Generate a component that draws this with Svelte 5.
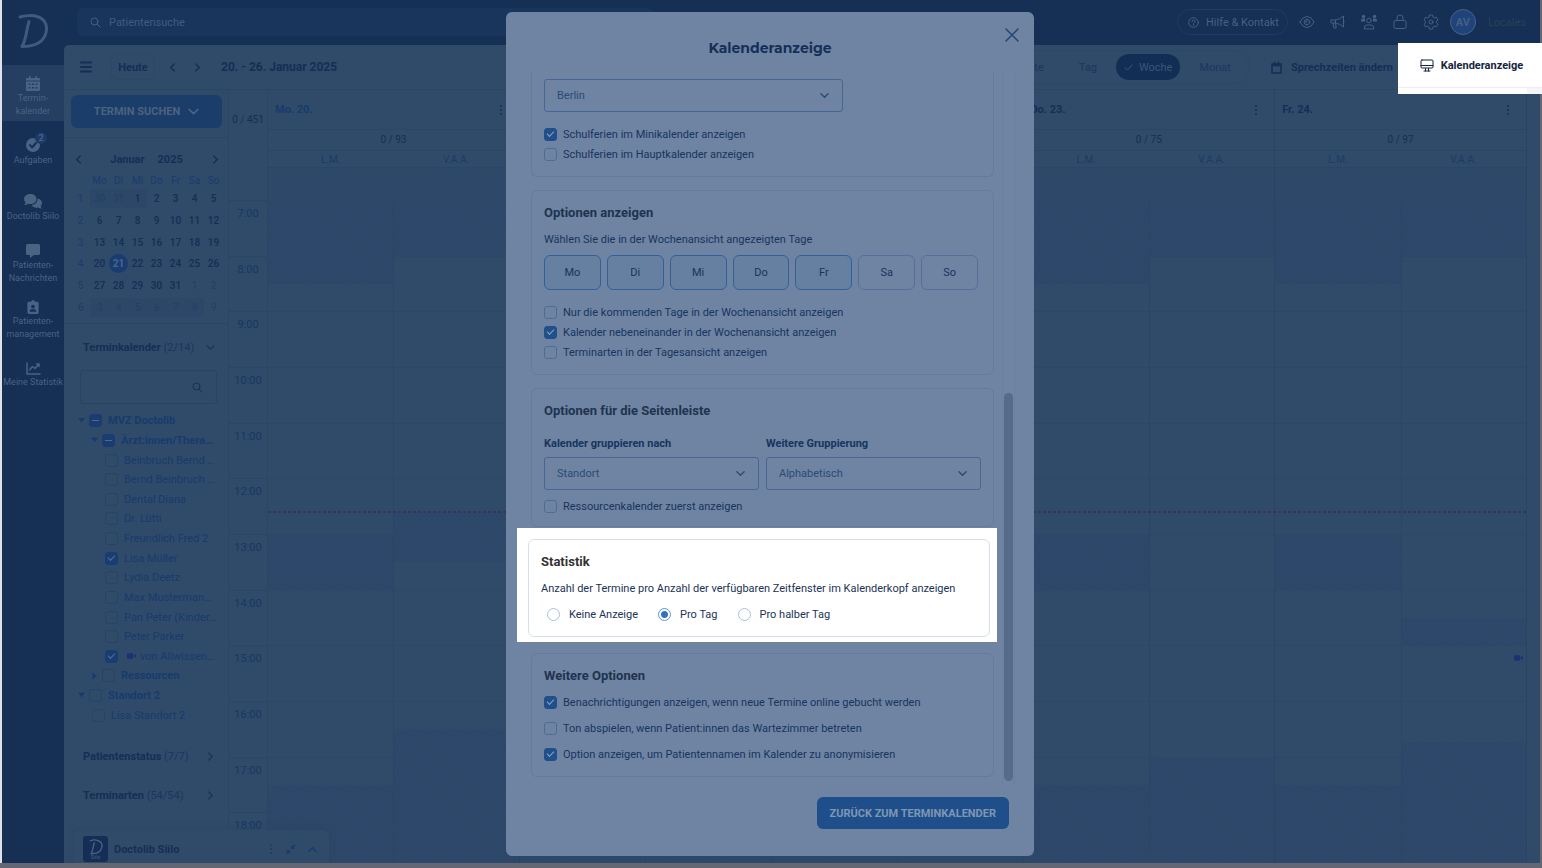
<script lang="ts">
	type Block = [number, number];

	const FIRST_HOUR = 7;
	const HOUR_COUNT = 12;
	const hours = Array.from({ length: HOUR_COUNT }, (_, i) => FIRST_HOUR + i);

	// closed times per practitioner, in hours
	const days: { name?: string; count?: string; muted?: boolean; lm: Block[]; vaa: Block[]; video?: boolean }[] = [
		{ name: 'Mo. 20.', count: '0 / 93', muted: true, lm: [[7, 8.5], [13, 14], [17.5, 19]], vaa: [[7, 8], [12.6, 13.5], [16.5, 19]] },
		{ lm: [[7, 8.5], [13, 14], [17.5, 19]], vaa: [[7, 8], [17, 19]] },
		{ lm: [[7, 8.5], [13, 14], [17.5, 19]], vaa: [[7, 8], [17, 19]] },
		{ name: 'Do. 23.', count: '0 / 75', lm: [[7, 8.5], [13, 14], [17.5, 19]], vaa: [[7, 8], [17, 19]] },
		{ name: 'Fr. 24.', count: '0 / 97', lm: [[7, 8.5], [13, 14], [17.5, 19]], vaa: [[7, 8], [14.5, 15], [16.75, 19]], video: true }
	];

	const blockStyle = ([from, to]: Block) =>
		`top: ${((from - FIRST_HOUR) / HOUR_COUNT) * 100}%; height: ${((to - from) / HOUR_COUNT) * 100}%`;

	const weekdays = ['Mo', 'Di', 'Mi', 'Do', 'Fr', 'Sa', 'So'];
	const weeks = [
		[30, 31, 1, 2, 3, 4, 5],
		[6, 7, 8, 9, 10, 11, 12],
		[13, 14, 15, 16, 17, 18, 19],
		[20, 21, 22, 23, 24, 25, 26],
		[27, 28, 29, 30, 31, 1, 2],
		[3, 4, 5, 6, 7, 8, 9]
	];
	const isOtherMonth = (w: number, d: number) => (w === 0 && d > 20) || (w > 3 && d < 15);

	type Row = { label: string; level: number; bold?: boolean; arrow?: 'down' | 'right'; checked?: boolean; partial?: boolean; video?: boolean };
	const tree: Row[] = [
		{ label: 'MVZ Doctolib', level: 0, bold: true, arrow: 'down', partial: true },
		{ label: 'Ärzt:innen/Thera…', level: 1, bold: true, arrow: 'down', partial: true },
		{ label: 'Beinbruch Bernd …', level: 2 },
		{ label: 'Bernd Beinbruch …', level: 2 },
		{ label: 'Dental Diana', level: 2 },
		{ label: 'Dr. Lütti', level: 2 },
		{ label: 'Freundlich Fred 2', level: 2 },
		{ label: 'Lisa Müller', level: 2, checked: true },
		{ label: 'Lydia Deetz', level: 2 },
		{ label: 'Max Musterman…', level: 2 },
		{ label: 'Pan Peter (Kinder…', level: 2 },
		{ label: 'Peter Parker', level: 2 },
		{ label: 'von Allwissen…', level: 2, checked: true, video: true },
		{ label: 'Ressourcen', level: 1, bold: true, arrow: 'right' },
		{ label: 'Standort 2', level: 0, bold: true, arrow: 'down' },
		{ label: 'Lisa Standort 2', level: 3 }
	];

	let shownDays = $state([true, true, true, true, true, false, false]);
	let statistik = $state('tag');
</script>

{#snippet chevron(dir: string, size = 9)}
	<svg class="chevron {dir}" width={size} height={size} viewBox="0 0 10 10"><path d="M1 3l4 4 4-4" /></svg>
{/snippet}

{#snippet dots()}
	<svg class="solid" width="4" height="12" viewBox="0 0 4 12"><circle cx="2" cy="2" r="1" /><circle cx="2" cy="6" r="1" /><circle cx="2" cy="10" r="1" /></svg>
{/snippet}

{#snippet camera()}
	<svg class="solid camera" width="9" height="8" viewBox="0 0 10 8"><path d="M1 1h5q1 0 1 1v4q0 1-1 1H1Q0 7 0 6V2q0-1 1-1zM7.5 3.5 10 2v4L7.5 4.5z" /></svg>
{/snippet}

{#snippet logo(size: number)}
	<svg width={size} height={size} viewBox="0 0 32 36"><path fill="none" stroke="currentColor" stroke-width="3" stroke-linecap="round" stroke-linejoin="round" d="M3 4c4-1.500 13-2 17-.5 7 2 11 8 9 16-2 9-9 14-24 14 4-6 4-15 7-25" /></svg>
{/snippet}

{#snippet check(label: string, checked = false)}
	<label class="check"><input type="checkbox" {checked} /><span>{label}</span></label>
{/snippet}

<div class="app">
	<nav>
		<a class="brand" href="#start" aria-label="Doctolib">{@render logo(36)}</a>
		<a class="item active" href="#termine">
			<svg class="solid" width="14" height="15" viewBox="0 0 14 15"><path fill-rule="evenodd" d="M3 0h1.500v2h5V0H11v2h2q1 0 1 1v1.500H0V3q0-1 1-1h2zM0 5.500h14V14q0 1-1 1H1q-1 0-1-1zM2.500 7.500v1.500h2V7.500zm3.500 0v1.500h2V7.500zm3.500 0v1.500h2V7.500zm-7 3.500v1.500h2V11zm3.500 0v1.500h2V11zm3.500 0v1.500h2V11z" /></svg>
			<span>Termin-<br />kalender</span>
		</a>
		<a class="item short" href="#aufgaben">
			<span class="with-badge">
				<svg width="16" height="16" viewBox="0 0 16 16"><circle class="fill" cx="8" cy="8" r="7" /><path class="cut" d="M5 8l2 2.500L11 6" /></svg>
				<b class="badge">2</b>
			</span>
			<span>Aufgaben</span>
		</a>
		<a class="item short" href="#siilo">
			<svg class="solid" width="18" height="15" viewBox="0 0 18 15"><path d="M6.500 0C10 0 12.500 2 12.500 5s-2.500 5-6 5q-1 0-2-.3Q3 11 0 11q1.500-1.300 1.600-2.600Q0 7 0 5c0-3 3-5 6.500-5zM13.500 4.500c2.500.3 4.500 2 4.500 4.500q0 1.800-1.300 3Q17 13.500 18 14.500q-2.500 0-4-1-4.500 1-6.500-2.500 6 0 6-6.500z" /></svg>
			<span>Doctolib Siilo</span>
		</a>
		<a class="item" href="#nachrichten">
			<svg class="solid" width="14" height="14" viewBox="0 0 14 14"><path d="M1.500 0h11Q14 0 14 1.500v8Q14 11 12.500 11H8l-4 3v-3H1.500Q0 11 0 9.500v-8Q0 0 1.500 0z" /></svg>
			<span>Patienten-<br />Nachrichten</span>
		</a>
		<a class="item" href="#patienten">
			<svg class="solid" width="12" height="14" viewBox="0 0 12 15"><path fill-rule="evenodd" d="M1.500 2H4a2 2 0 0 1 4 0h2.500Q12 2 12 3.500v10q0 1.500-1.500 1.500h-9Q0 15 0 13.500v-10Q0 2 1.500 2zM6 5a2 2 0 1 0 0 4 2 2 0 0 0 0-4zM2.500 12.500h7q0-2.500-2-2.500h-3q-2 0-2 2.500z" /></svg>
			<span>Patienten-<br />management</span>
		</a>
		<a class="item short" href="#statistik">
			<svg class="line" width="15" height="13" viewBox="0 0 15 13"><path stroke-width="1.500" d="M1 1v11h13M3.500 8l3-3.500L9 6.500l4-4.500M10.500 2H13v2.500" /></svg>
			<span>Meine Statistik</span>
		</a>
	</nav>

	<div class="main">
		<header>
			<label class="search">
				<svg class="line" width="11" height="11" viewBox="0 0 11 11"><circle cx="4.500" cy="4.500" r="3.500" /><path d="M7.200 7.200l3 3" /></svg>
				<input type="text" placeholder="Patientensuche" aria-label="Patientensuche" />
			</label>
			<div class="tools">
				<button class="help">
					<svg class="line" width="11" height="11" viewBox="0 0 11 11"><circle cx="5.500" cy="5.500" r="4.800" /><path d="M4 4.400q0-1.400 1.500-1.400T7 4.300c0 1-1.500 1-1.500 2M5.500 7.500v.7" /></svg>
					Hilfe &amp; Kontakt
				</button>
				<button class="icon" aria-label="Anzeigen">
					<svg class="line" width="16" height="14" viewBox="0 0 16 14"><path d="M1 7q2.500-5.500 7-5.500T15 7q-2.500 5.500-7 5.500T1 7z" /><circle cx="8" cy="7" r="2.800" /><path d="M8 5.500v1.500H6.500" /></svg>
				</button>
				<button class="icon" aria-label="Neuigkeiten">
					<svg class="line" width="16" height="16" viewBox="0 0 16 16"><path d="M1.500 6h4q4-.5 8-4v11q-4-3.500-8-4h-4q-.8 0-.8-1V7q0-1 .8-1zM5.500 6v3M3 9l1 5h2.200L5.500 9M13.500 6q1.200 1.500 0 3" /></svg>
				</button>
				<button class="icon" aria-label="Team">
					<svg class="team" width="18" height="16" viewBox="0 0 18 16"><path class="fill" d="M1 6.500q0-2 2-2h2v3H1zM17 6.500q0-2-2-2h-2v3h4z" /><circle class="fill" cx="3.500" cy="2.500" r="1.700" /><circle class="fill" cx="14.500" cy="2.500" r="1.700" /><circle cx="9" cy="6.500" r="2.300" /><path d="M4 14.500q0-3.500 3-3.500h4q3 0 3 3.500z" /></svg>
				</button>
				<button class="icon" aria-label="Sperren">
					<svg class="line" width="14" height="16" viewBox="0 0 14 16"><rect x="1" y="6.500" width="12" height="8" rx="1.500" /><path d="M4 6.500V4a3 3 0 0 1 6 0v2.500" /></svg>
				</button>
				<button class="icon" aria-label="Einstellungen">
					<svg class="line" width="16" height="16" viewBox="0 0 16 16"><path d="M6.500 1h3l.5 2 1.500.9 2-.6 1.500 2.600L13.500 7.300v1.500L15 10.200l-1.500 2.600-2-.6-1.500.9-.5 2h-3L6 13.100l-1.500-.9-2 .6L1 10.200l1.500-1.400V7.300L1 5.900l1.500-2.600 2 .6L6 3z" /><circle cx="8" cy="8" r="2" /></svg>
				</button>
				<button class="avatar">AV</button>
				<a class="locales" href="#locales">Locales</a>
			</div>
		</header>

		<div class="toolbar">
			<button class="burger" aria-label="Menü"><svg class="thick" width="14" height="12" viewBox="0 0 14 12"><path d="M2 1.500h10M2 6h10M2 10.500h10" /></svg></button>
			<button class="today">Heute</button>
			<button class="step" aria-label="Vorherige Woche">{@render chevron('left')}</button>
			<button class="step" aria-label="Nächste Woche">{@render chevron('right')}</button>
			<h1>20. - 26. Januar 2025</h1>
			<div class="views">
				<button>Liste</button>
				<button>Tag</button>
				<button class="current"><svg width="9" height="7" viewBox="0 0 9 7"><path d="M1 3.500L3.500 6 8 1" /></svg>Woche</button>
				<button>Monat</button>
			</div>
			<button class="office"><svg class="line" width="11" height="13" viewBox="0 0 11 13"><path stroke-width="1.500" d="M1 3h9v9H1zM3.500 1v3M7.500 1v3M1 4.500h9" /></svg>Sprechzeiten ändern</button>
			<div class="spotlight-menu">
				<button>
					<svg class="line" width="14" height="13" viewBox="0 0 14 13"><rect x="1" y="1" width="12" height="8" rx="1" /><path d="M1 6.500h12M5.500 9.500V12M8.500 9.500V12M4 12h6" /></svg>
					Kalenderanzeige
				</button>
				<div class="under"></div>
			</div>
		</div>

		<div class="content">
			<aside>
				<div class="find"><button>TERMIN SUCHEN {@render chevron('down', 11)}</button></div>
				<div class="mini">
					<div class="mini-head">
						<button aria-label="Vorheriger Monat">{@render chevron('left')}</button>
						<span>Januar</span><span>2025</span>
						<button aria-label="Nächster Monat">{@render chevron('right')}</button>
					</div>
					<table>
						<thead><tr><th></th>{#each weekdays as d}<th>{d}</th>{/each}</tr></thead>
						<tbody>
							{#each weeks as week, w}
								<tr>
									<th>{w + 1}</th>
									{#each week as d, i}
										<td class:other={isOtherMonth(w, d)} class:holiday={(w === 0 && i < 3) || (w === 5 && i < 6)}>
											<span class:selected={w === 3 && d === 21}>{d}</span>
										</td>
									{/each}
								</tr>
							{/each}
						</tbody>
					</table>
				</div>
				<button class="fold first"><span><b>Terminkalender</b> (2/14)</span>{@render chevron('down')}</button>
				<label class="filter">
					<input type="text" aria-label="Kalender filtern" />
					<svg class="line" width="11" height="11" viewBox="0 0 11 11"><circle cx="4.500" cy="4.500" r="3.500" /><path d="M7.200 7.200l3 3" /></svg>
				</label>
				<div class="tree">
					{#each tree as row}
						<div class="row level{row.level}">
							<i class="arrow {row.arrow ?? ''}"></i>
							<label class:bold={row.bold}>
								<input type="checkbox" checked={row.checked} class:partial={row.partial} />
								{#if row.video}{@render camera()}{/if}
								<span>{row.label}</span>
							</label>
						</div>
					{/each}
				</div>
				<button class="fold"><span><b>Patientenstatus</b> (7/7)</span>{@render chevron('right')}</button>
				<button class="fold"><span><b>Terminarten</b> (54/54)</span>{@render chevron('right')}</button>
			</aside>

			<section class="calendar">
				<div class="times">
					<div class="total">0 / 451</div>
					<div class="hour-list">
						{#each hours as h}<div>{h}:00</div>{/each}
					</div>
				</div>
				<div class="days">
					{#each days as day}
						<div class="day">
							<div class="day-name" class:muted={day.muted}>{#if day.name}<b>{day.name}</b>{@render dots()}{/if}</div>
							<div class="day-count">{day.count ?? ''}</div>
							<div class="doctors">{#if day.name}<span>L.M.</span><span>V.A.A.</span>{/if}</div>
							<div class="all-day"></div>
							<div class="slots">
								{#each [day.lm, day.vaa] as blocks, i}
									<div class="slot-col">
										{#each hours as h}<div class="hour"></div>{/each}
										{#each blocks as block}<div class="closed" style={blockStyle(block)}></div>{/each}
										{#if day.video && i === 1}<div class="call">{@render camera()}</div>{/if}
									</div>
								{/each}
							</div>
						</div>
					{/each}
					<div class="now"></div>
				</div>
			</section>
		</div>
	</div>

	<div class="siilo">
		<span class="siilo-logo">{@render logo(16)}<small>Siilo</small></span>
		<b>Doctolib Siilo</b>
		{@render dots()}
		<svg class="solid" width="11" height="11" viewBox="0 0 11 11"><path d="M6 5V1l1.500 1.500L9.500.5l1 1-2 2L10 5zM5 6v4L3.500 8.500l-2 2-1-1 2-2L1 6z" /></svg>
		{@render chevron('up')}
	</div>
	<div class="page-edge"></div>

	<div class="backdrop">
		<div class="modal" role="dialog" aria-modal="true" aria-labelledby="modal-title">
			<button class="close" aria-label="Schließen"><svg class="line" width="14" height="14" viewBox="0 0 14 14"><path d="M1 1l12 12M13 1L1 13" /></svg></button>
			<h2 id="modal-title">Kalenderanzeige</h2>
			<div class="scroller">
				<div class="cards">
					<section class="card cut-off">
						<div class="select wide">
							<select aria-label="Bundesland"><option>Berlin</option></select>
							{@render chevron('down')}
						</div>
						<div class="checks">
							{@render check('Schulferien im Minikalender anzeigen', true)}
							{@render check('Schulferien im Hauptkalender anzeigen')}
						</div>
					</section>

					<section class="card">
						<h3>Optionen anzeigen</h3>
						<p>Wählen Sie die in der Wochenansicht angezeigten Tage</p>
						<div class="day-buttons">
							{#each weekdays as d, i}
								<button class:on={shownDays[i]} aria-pressed={shownDays[i]} onclick={() => (shownDays[i] = !shownDays[i])}>{d}</button>
							{/each}
						</div>
						<div class="checks">
							{@render check('Nur die kommenden Tage in der Wochenansicht anzeigen')}
							{@render check('Kalender nebeneinander in der Wochenansicht anzeigen', true)}
							{@render check('Terminarten in der Tagesansicht anzeigen')}
						</div>
					</section>

					<section class="card sidebar-card">
						<h3>Optionen für die Seitenleiste</h3>
						<div class="fields">
							<div>
								<label for="group">Kalender gruppieren nach</label>
								<div class="select">
									<select id="group"><option>Standort</option></select>
									{@render chevron('down')}
								</div>
							</div>
							<div>
								<label for="group2">Weitere Gruppierung</label>
								<div class="select">
									<select id="group2"><option>Alphabetisch</option></select>
									{@render chevron('down')}
								</div>
							</div>
						</div>
						{@render check('Ressourcenkalender zuerst anzeigen')}
					</section>

					<div class="spotlight">
						<section class="card">
							<h3>Statistik</h3>
							<p>Anzahl der Termine pro Anzahl der verfügbaren Zeitfenster im Kalenderkopf anzeigen</p>
							<div class="radios">
								<label><input type="radio" name="statistik" value="keine" bind:group={statistik} />Keine Anzeige</label>
								<label><input type="radio" name="statistik" value="tag" bind:group={statistik} />Pro Tag</label>
								<label><input type="radio" name="statistik" value="halb" bind:group={statistik} />Pro halber Tag</label>
							</div>
						</section>
					</div>

					<section class="card">
						<h3>Weitere Optionen</h3>
						<div class="checks loose">
							{@render check('Benachrichtigungen anzeigen, wenn neue Termine online gebucht werden', true)}
							{@render check('Ton abspielen, wenn Patient:innen das Wartezimmer betreten')}
							{@render check('Option anzeigen, um Patientennamen im Kalender zu anonymisieren', true)}
						</div>
					</section>
				</div>
				<div class="track"><div class="thumb"></div></div>
			</div>
			<footer><button>ZURÜCK ZUM TERMINKALENDER</button></footer>
		</div>
	</div>
</div>

<style>
	:global(body) {
		margin: 0;
		background: #e4e6ea;
	}
	.app {
		--page: #304a69;
		--navy: #152f55;
		--ink: #152e56;
		--soft: #183b6e;
		--rule: #2b4564;
		position: relative;
		display: flex;
		height: 100vh;
		overflow: hidden;
		box-sizing: border-box;
		padding: 0 2px;
		background: linear-gradient(90deg, #dfe2e6 2px, #636773 2px);
		font-family: Roboto, 'Liberation Sans', sans-serif;
		font-size: 11px;
		color: var(--ink);
	}
	.app * {
		box-sizing: border-box;
	}
	button,
	input,
	select {
		font: inherit;
		color: inherit;
		margin: 0;
	}
	button {
		display: flex;
		align-items: center;
		justify-content: center;
		padding: 0;
		border: 0;
		background: none;
	}
	a {
		color: inherit;
		text-decoration: none;
	}
	svg {
		flex: none;
		display: block;
		fill: none;
		stroke: currentColor;
		stroke-linecap: round;
		stroke-linejoin: round;
	}
	svg.solid,
	svg .fill {
		fill: currentColor;
		stroke: none;
	}
	svg.thick {
		stroke-width: 2;
	}
	.chevron {
		stroke-width: 1.5;
	}
	.chevron.left {
		transform: rotate(90deg);
	}
	.chevron.right {
		transform: rotate(-90deg);
	}
	.chevron.up {
		transform: rotate(180deg);
	}
	.camera {
		color: #1d3273;
	}

	/* left navigation */
	nav {
		flex: none;
		width: 62px;
		display: flex;
		flex-direction: column;
		background: var(--navy);
		color: #4a6383;
	}
	.brand {
		display: flex;
		justify-content: center;
		height: 65px;
		padding-top: 13px;
		color: #3f5a7b;
	}
	.item {
		display: flex;
		flex-direction: column;
		align-items: center;
		gap: 1px;
		height: 56px;
		padding-top: 11px;
		font-size: 9px;
		line-height: 13px;
		text-align: center;
		white-space: nowrap;
	}
	.item.short {
		padding-top: 17px;
	}
	.item.active {
		background: #243f62;
	}
	.with-badge {
		position: relative;
		height: 16px;
		margin-top: -1px;
	}
	.cut {
		stroke: var(--navy);
		stroke-width: 2;
	}
	.badge {
		position: absolute;
		left: 10px;
		top: -5px;
		width: 12px;
		height: 12px;
		border-radius: 6px;
		background: #1d3a68;
		line-height: 12px;
	}

	.main {
		flex: 1;
		min-width: 0;
		display: flex;
		flex-direction: column;
		background: var(--navy);
	}
	header {
		flex: none;
		display: flex;
		justify-content: space-between;
		align-items: center;
		height: 45px;
		padding: 0 14px 1px 13px;
		color: #456083;
	}
	.search {
		display: flex;
		align-items: center;
		gap: 8px;
		width: 576px;
		height: 28px;
		padding-left: 13px;
		border-radius: 6px;
		background: #1a355b;
	}
	.search input {
		flex: 1;
		border: 0;
		background: none;
		padding: 0;
	}
	.search input::placeholder {
		color: #405b7e;
	}
	.tools {
		display: flex;
		align-items: center;
	}
	.help {
		gap: 7px;
		height: 26px;
		padding: 0 8px 0 10px;
		margin-right: 4px;
		border: 1px solid #203b62;
		border-radius: 13px;
		white-space: nowrap;
	}
	.icon {
		width: 31px;
	}
	.avatar {
		width: 26px;
		height: 26px;
		margin-left: 3px;
		border: 1px solid #45648e;
		border-radius: 13px;
		background: #1f437a;
		font-weight: 700;
	}
	.locales {
		margin-left: 12px;
		color: #2a3f5a;
	}

	.toolbar {
		flex: none;
		display: flex;
		align-items: center;
		height: 45px;
		border-bottom: 1px solid var(--rule);
		border-top-left-radius: 5px;
		background: var(--page);
	}
	.burger {
		margin-left: 15px;
	}
	.today {
		width: 44px;
		height: 26px;
		margin: 0 5px 0 18px;
		border: 1px solid #2d4766;
		border-radius: 6px;
		font-weight: 700;
	}
	.step {
		width: 25px;
	}
	h1 {
		margin: 0 0 0 11px;
		font-size: 12px;
		white-space: nowrap;
	}
	.views {
		display: flex;
		align-items: center;
		gap: 3px;
		height: 34px;
		margin-left: auto;
		padding: 0 2px;
		border: 1px solid #2d4766;
		border-radius: 17px;
		color: #1a3660;
	}
	.views button {
		height: 26px;
		padding: 0 16px;
	}
	.views .current {
		gap: 6px;
		padding: 0 8px;
		border-radius: 13px;
		background: #132e55;
		color: #3a5577;
	}
	.office {
		gap: 9px;
		margin: 0 5px 0 21px;
		font-weight: 700;
		white-space: nowrap;
	}
	.spotlight-menu {
		align-self: flex-start;
		position: relative;
		z-index: 2;
		width: 144px;
		height: 51px;
		margin: -2px -2px 0 0;
		background: #fff;
		color: #14253f;
	}
	.spotlight-menu button {
		gap: 7px;
		width: 100%;
		height: 45px;
		border-bottom: 1px solid #eceef1;
		padding-left: 3px;
		font-weight: 700;
	}
	.under {
		height: 6px;
		margin-left: 129px;
		background: #f5f5f6;
	}

	.content {
		flex: 1;
		min-height: 0;
		display: flex;
		background: var(--page);
	}

	/* sidebar */
	aside {
		flex: none;
		width: 165px;
		border-right: 1px solid var(--rule);
	}
	.find {
		height: 48px;
		padding: 5px 6px 0 7px;
		border-bottom: 1px solid var(--rule);
	}
	.find button {
		gap: 8px;
		width: 100%;
		height: 33px;
		border-radius: 6px;
		background: #1b3d6a;
		color: #4b6280;
		font-weight: 700;
	}
	.mini {
		height: 186px;
		padding: 11px 6px 0 7px;
		border-bottom: 1px solid var(--rule);
	}
	.mini-head {
		display: flex;
		align-items: center;
		justify-content: center;
		gap: 13px;
		height: 21px;
		font-size: 11px;
		font-weight: 700;
	}
	.mini-head button {
		width: 14px;
	}
	.mini-head button:first-child {
		margin-right: auto;
	}
	.mini-head button:last-child {
		margin-left: auto;
	}
	table {
		width: 152px;
		height: 148px;
		table-layout: fixed;
		border-collapse: collapse;
		font-size: 10px;
		text-align: center;
	}
	th,
	td {
		padding: 0;
		line-height: 19px;
	}
	th {
		font-weight: 400;
		color: #193c6e;
	}
	thead th {
		height: 18px;
		padding-top: 4px;
		line-height: 14px;
	}
	td {
		font-weight: 500;
		color: #132e57;
	}
	td.other {
		font-weight: 400;
		color: #223f67;
	}
	td.holiday {
		background: linear-gradient(#2d4768, #2d4768) center / 100% 19px no-repeat;
	}
	td span {
		display: block;
		width: 19px;
		height: 19px;
		margin: auto;
	}
	td .selected {
		border-radius: 10px;
		background: #1a3c70;
		color: #4b6588;
		font-weight: 700;
	}
	.fold {
		justify-content: space-between;
		width: 100%;
		height: 39px;
		padding: 0 13px 0 19px;
		color: #1a3660;
	}
	.fold.first {
		height: 46px;
	}
	.fold b {
		color: var(--ink);
	}
	.filter {
		display: flex;
		align-items: center;
		height: 34px;
		margin: 0 11px 7px 16px;
		padding-right: 13px;
		border: 1px solid #2a4363;
		border-radius: 3px;
	}
	.filter input {
		flex: 1;
		min-width: 0;
		border: 0;
		background: none;
	}
	.tree {
		display: grid;
		grid-auto-rows: 1fr;
		height: 314px;
		margin: 1px 0 12px;
		padding-left: 14px;
		color: var(--soft);
	}
	.row {
		display: flex;
		align-items: center;
		gap: 4px;
		white-space: nowrap;
	}
	.level1 {
		padding-left: 13px;
	}
	.level2 {
		padding-left: 16px;
	}
	.level3 {
		padding-left: 3px;
	}
	.arrow {
		width: 7px;
		height: 7px;
	}
	.arrow.down {
		clip-path: polygon(0 10%, 100% 10%, 50% 75%);
		background: var(--soft);
	}
	.arrow.right {
		clip-path: polygon(20% 0, 85% 50%, 20% 100%);
		background: var(--soft);
	}
	.row label {
		display: flex;
		align-items: center;
		gap: 6px;
	}
	.row .bold {
		font-weight: 700;
	}
	.row label :global(.camera) {
		margin: 0 -2px 0 3px;
	}
	input[type='checkbox'] {
		appearance: none;
		flex: none;
		display: grid;
		place-items: center;
		width: 13px;
		height: 13px;
		border: 1px solid #284363;
		border-radius: 3px;
	}
	input[type='checkbox']:checked,
	input.partial {
		border-color: #1a3c70;
		background: #1a3c70;
	}
	input[type='checkbox']:checked::after {
		content: '';
		width: 6px;
		height: 3px;
		margin-bottom: 2px;
		border: solid #56708f;
		border-width: 0 0 1px 1px;
		transform: rotate(-45deg);
	}
	input.partial::after {
		content: '';
		width: 7px;
		height: 1px;
		background: #4f6a8b;
	}

	/* week grid */
	.calendar {
		flex: 1;
		display: flex;
		padding-right: 13px;
	}
	.times {
		flex: none;
		width: 39px;
		display: flex;
		flex-direction: column;
		border-right: 1px solid var(--rule);
		text-align: center;
	}
	.total {
		height: 110px;
		padding-top: 23px;
		font-size: 10px;
		line-height: 14px;
	}
	.hour-list {
		flex: 1;
		display: grid;
		grid-auto-rows: 1fr;
		color: #183762;
	}
	.hour-list div {
		border-top: 1px solid var(--rule);
		padding-top: 6px;
		line-height: 14px;
	}
	.days {
		position: relative;
		flex: 1;
		display: grid;
		grid-template-columns: repeat(5, 1fr);
	}
	.day {
		display: flex;
		flex-direction: column;
		border-right: 1px solid #2a4363;
	}
	.day-name {
		display: flex;
		align-items: center;
		justify-content: space-between;
		height: 40px;
		padding: 0 16px 0 7px;
		border-bottom: 1px solid var(--rule);
	}
	.day-name.muted b {
		color: var(--soft);
	}
	.day-count {
		height: 21px;
		border-bottom: 1px solid var(--rule);
		font-size: 10px;
		line-height: 20px;
		text-align: center;
	}
	.doctors {
		display: grid;
		grid-template-columns: 1fr 1fr;
		height: 17px;
		border-bottom: 1px solid var(--rule);
		color: #1b3c66;
		font-size: 10px;
		line-height: 17px;
		text-align: center;
	}
	.all-day {
		height: 32px;
		background: #2e4869;
	}
	.slots {
		flex: 1;
		display: grid;
		grid-template-columns: 1fr 1fr;
	}
	.slot-col {
		position: relative;
		display: grid;
		grid-auto-rows: 1fr;
	}
	.slot-col + .slot-col {
		border-left: 1px solid var(--rule);
	}
	.hour {
		border-top: 1px solid #2d4766;
	}
	.closed {
		position: absolute;
		left: 0;
		right: 0;
		background: repeating-linear-gradient(45deg, #2d476a 0 2px, #2e4869 2px 4px);
	}
	.call {
		position: absolute;
		right: 3px;
		top: 68%;
	}
	.now {
		position: absolute;
		left: 0;
		right: 0;
		top: 421px;
		height: 2px;
		background: repeating-linear-gradient(90deg, #38345e 0 3px, transparent 3px 5px);
	}

	.siilo {
		position: absolute;
		left: 74px;
		bottom: 0;
		display: flex;
		align-items: center;
		width: 255px;
		height: 38px;
		padding: 0 12px 0 9px;
		border-radius: 6px 6px 0 0;
		background: #304b69;
		box-shadow: 0 0 6px #2b4562;
	}
	.siilo b {
		margin: 0 auto 0 6px;
		font-size: 11px;
	}
	.siilo > :global(svg) {
		margin-left: 12px;
		color: var(--soft);
	}
	.siilo-logo {
		display: flex;
		flex-direction: column;
		align-items: center;
		width: 25px;
		height: 26px;
		padding-top: 3px;
		border-radius: 3px;
		background: #142e55;
		color: #4a6383;
	}
	small {
		font-size: 5px;
		line-height: 5px;
	}
	.page-edge {
		position: absolute;
		left: 0;
		right: 0;
		bottom: 0;
		height: 5px;
		background: #636773;
	}

	/* settings dialog */
	.backdrop {
		position: absolute;
		inset: 12px 2px auto 0;
		display: flex;
		justify-content: center;
	}
	.modal {
		position: relative;
		width: 528px;
		border-radius: 6px;
		background: #6e84a2;
		color: #18345f;
	}
	.close {
		position: absolute;
		right: 15px;
		top: 16px;
		color: #26456f;
	}
	.close svg {
		stroke-width: 1.5;
	}
	h2 {
		margin: 0;
		height: 60px;
		padding-top: 25px;
		font-family: Montserrat, 'Open Sans', sans-serif;
		font-size: 14px;
		line-height: 22px;
		text-align: center;
		color: #142f58;
	}
	.scroller {
		display: flex;
		gap: 8px;
		padding: 0 19px 0 25px;
	}
	.cards {
		flex: 1;
		display: flex;
		flex-direction: column;
		gap: 13px;
		padding-bottom: 7px;
	}
	.card {
		padding: 12px;
		border: 1px solid #627b9f;
		border-radius: 6px;
	}
	.card.cut-off {
		padding-top: 7px;
		border-top: 0;
		border-radius: 0 0 6px 6px;
	}
	h3 {
		margin: 0;
		font-size: 13px;
		line-height: 20px;
		color: #20334f;
	}
	p {
		margin: 9px 0 0;
		line-height: 16px;
	}
	.day-buttons {
		display: grid;
		grid-template-columns: repeat(7, 1fr);
		gap: 6px;
		width: 434px;
		margin-top: 7px;
	}
	.day-buttons button {
		height: 35px;
		border: 1px solid #56709a;
		border-radius: 6px;
	}
	.day-buttons .on {
		border-color: #335f9b;
		background: #6580a0;
	}
	.checks {
		margin-top: 12px;
	}
	.check {
		display: flex;
		align-items: center;
		gap: 6px;
		height: 20px;
	}
	.modal input[type='checkbox'] {
		border-color: #4f6c97;
	}
	.modal input[type='checkbox']:checked {
		border-color: #204f8a;
		background: #204f8a;
	}
	.modal input[type='checkbox']:checked::after {
		border-color: #8ba2bf;
	}
	.checks.loose {
		display: grid;
		gap: 6px;
		margin-top: 6px;
	}
	.select {
		position: relative;
	}
	.select.wide {
		width: 299px;
	}
	.select select {
		display: block;
		appearance: none;
		width: 100%;
		height: 33px;
		padding: 0 12px;
		border: 1px solid #486693;
		border-radius: 3px;
		background: none;
		color: #2c4a76;
	}
	.select :global(.chevron) {
		position: absolute;
		right: 14px;
		top: 12px;
		color: #2c4a76;
	}
	.sidebar-card {
		padding-bottom: 10px;
	}
	.fields {
		display: grid;
		grid-template-columns: 215px 215px;
		gap: 7px;
		margin: 14px 0 6px;
	}
	.fields label {
		display: block;
		margin-bottom: 4px;
		font-weight: 700;
		line-height: 18px;
	}
	.spotlight {
		margin: -12px -3px -2px -14px;
		padding: 11px 7px 5px 11px;
		background: #fff;
		color: #1b3356;
	}
	.spotlight .card {
		border-color: #d6e0ec;
	}
	.spotlight h3 {
		color: #333;
	}
	.radios {
		display: flex;
		gap: 20px;
		height: 16px;
		margin: 9px 0 2px 6px;
	}
	.radios label {
		display: flex;
		align-items: center;
		gap: 9px;
	}
	input[type='radio'] {
		appearance: none;
		width: 13px;
		height: 13px;
		margin: 0;
		border: 1px solid #a9c0dc;
		border-radius: 7px;
	}
	input[type='radio']:checked {
		border-color: #5b95d6;
		background: radial-gradient(#2f72c4 3px, transparent 4px);
	}
	.track {
		width: 15px;
		padding-top: 321px;
		border: solid #6a809e;
		border-width: 0 1px;
	}
	.thumb {
		width: 9px;
		height: 388px;
		margin: auto;
		border-radius: 5px;
		background: #566b89;
	}
	footer {
		display: flex;
		justify-content: flex-end;
		padding: 13px 25px 27px;
	}
	footer button {
		height: 32px;
		padding: 0 13px;
		border-radius: 6px;
		background: #1f4f8a;
		color: #7f96b3;
		font-weight: 700;
	}
</style>
